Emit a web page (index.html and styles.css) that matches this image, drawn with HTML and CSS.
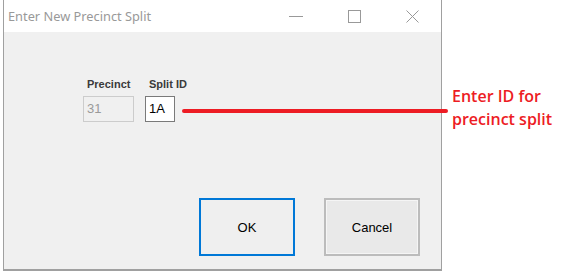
FILE: index.html
```html
<!DOCTYPE html>
<html lang="en">
<head>
  <meta charset="UTF-8">
  <title>Enter New Precinct Split</title>
  <link rel="stylesheet" href="styles.css">
</head>
<body>
  <div class="stage">
    <div class="window">
      <div class="titlebar">
        <span class="title">Enter New Precinct Split</span>
        <div class="caption-buttons">
          <span class="cap-btn">
            <svg width="14" height="14" viewBox="0 0 14 14"><path d="M0 7.5H14" stroke="#999" stroke-width="1"/></svg>
          </span>
          <span class="cap-btn">
            <svg width="13" height="13" viewBox="0 0 13 13"><rect x="0.5" y="0.5" width="12" height="12" fill="none" stroke="#999" stroke-width="1"/></svg>
          </span>
          <span class="cap-btn">
            <svg width="13" height="13" viewBox="0 0 13 13"><path d="M0.5 0.5L12.5 12.5M12.5 0.5L0.5 12.5" stroke="#999" stroke-width="1"/></svg>
          </span>
        </div>
      </div>
      <div class="dialog-body">
        <div class="fields">
          <div class="field">
            <label>Precinct</label>
            <div class="box box-disabled">31</div>
          </div>
          <div class="field">
            <label>Split ID</label>
            <div class="box box-split">1A</div>
          </div>
        </div>
        <div class="actions">
          <button class="btn btn-default">OK</button>
          <button class="btn">Cancel</button>
        </div>
      </div>
    </div>
    <div class="callout">Enter ID for<br>precinct split</div>
    <!-- annotation arrow, drawn over the dialog -->
    <div class="pointer"></div>
  </div>
</body>
</html>
```

FILE: styles.css
```css
html, body {
  margin: 0;
  padding: 0;
  background: #fff;
}
*, *:before, *:after {
  box-sizing: border-box;
}

.stage {
  position: relative;
  display: flex;
  align-items: flex-start;
  width: 564px;
  height: 271px;
  font-family: "Liberation Sans", Arial, sans-serif;
}

/* Dialog window */
.window {
  margin-left: 3px;
  width: 439px;
  height: 271px;
  border-left: 1px solid #a0a0a0;
  border-right: 1px solid #a0a0a0;
  border-bottom: 2px solid #a0a0a0;
  display: flex;
  flex-direction: column;
}
.titlebar {
  height: 32px;
  background: #fff;
  display: flex;
  align-items: center;
}
.title {
  padding-left: 4px;
  font-family: "Noto Sans", "Open Sans", sans-serif;
  font-size: 12.8px;
  color: #999;
  flex: 1;
}
.caption-buttons {
  display: flex;
  height: 32px;
}
.cap-btn {
  width: 58px;
  display: flex;
  align-items: center;
  justify-content: center;
}

.dialog-body {
  flex: 1;
  background: #f0f0f0;
  display: flex;
  flex-direction: column;
}
.fields {
  display: flex;
  gap: 11px;
  padding: 44px 0 0 79px;
}
.field {
  display: flex;
  flex-direction: column;
  gap: 4px;
}
.field label {
  padding-left: 4px;
  font-size: 11px;
  font-weight: bold;
  color: #3a3a3a;
  line-height: 16px;
}
.box {
  height: 26px;
  border: 1px solid #ccc;
  font-size: 13px;
  line-height: 24px;
  padding-left: 3px;
}
.box-disabled {
  width: 51px;
  background: #f0f0f0;
  color: #9a9a9a;
}
.box-split {
  width: 30px;
  background: #fff;
  border-color: #7a7a7a;
  color: #000;
}

.actions {
  margin-top: auto;
  display: flex;
  justify-content: flex-end;
  gap: 29px;
  padding: 0 21px 13px 0;
}
.btn {
  width: 96px;
  height: 58px;
  font-family: "Liberation Sans", Arial, sans-serif;
  font-size: 13px;
  color: #000;
  background: #e9e9e9;
  border: 2px solid #bcbcbc;
  box-shadow: inset 0 0 0 1px #f5f5f5;
}
.btn-default {
  background: #efefef;
  border-color: #0078d7;
  box-shadow: none;
}

/* Annotation */
.callout {
  margin: 85px 0 0 10px;
  font-family: "Open Sans", sans-serif;
  font-weight: 600;
  font-size: 16px;
  line-height: 23px;
  color: #ed1c24;
}
.pointer {
  position: absolute;
  left: 182px;
  top: 109px;
  width: 266px;
  height: 4px;
  border-radius: 2px;
  background: #ed1c24;
}
```
